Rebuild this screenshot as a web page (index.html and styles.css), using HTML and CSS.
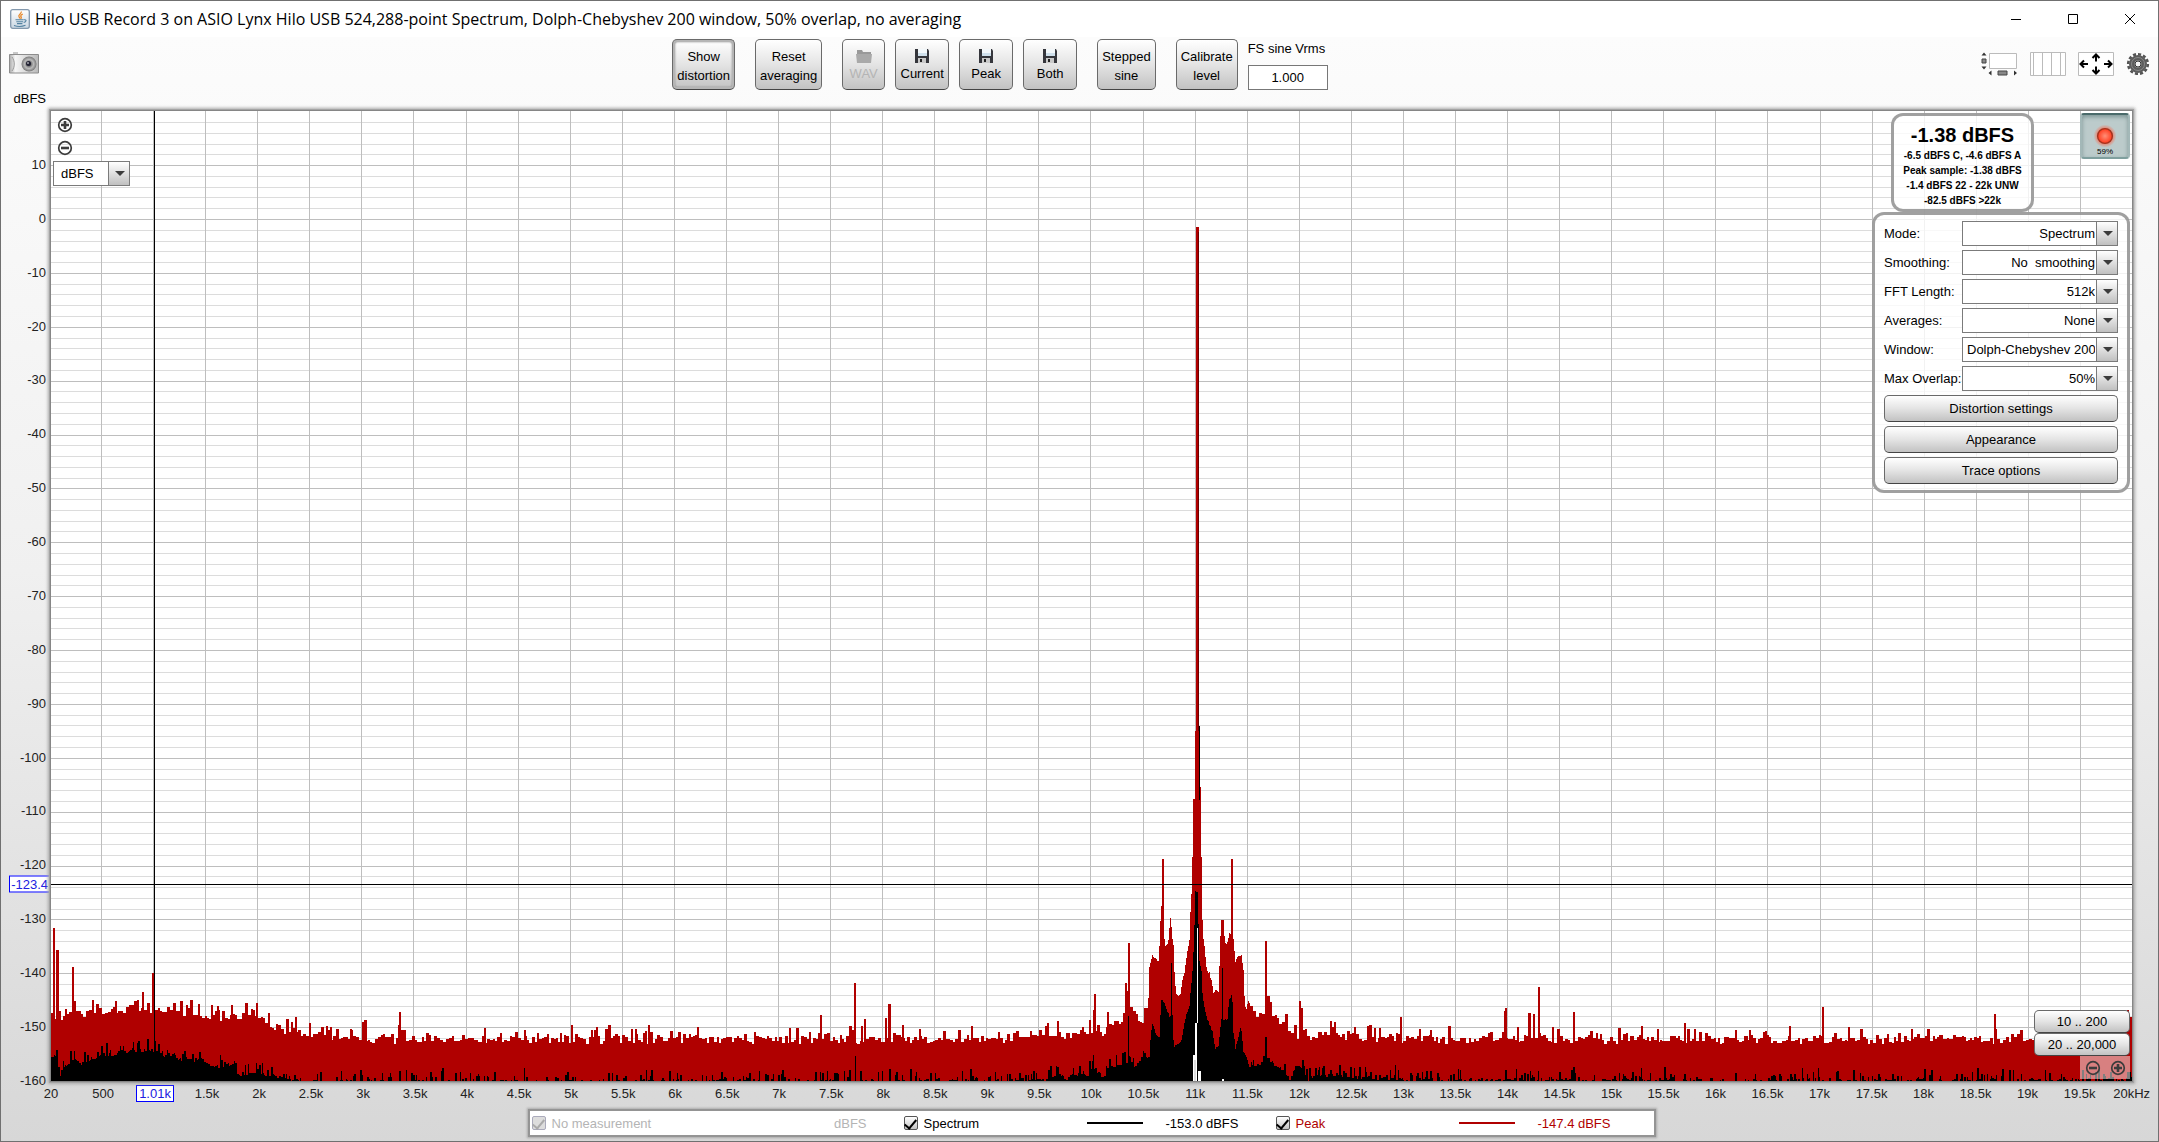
FILE: index.html
```html
<!DOCTYPE html>
<html lang="en">
<head>
<meta charset="utf-8">
<title>Hilo USB Record 3 on ASIO Lynx Hilo USB</title>
<link rel="stylesheet" href="styles.css">
</head>
<body>
<svg class="defs" width="0" height="0" aria-hidden="true">
  <symbol id="floppy" viewBox="0 0 16 16">
    <path d="M1 1h13l1 2v12H1z" fill="#35363c"/>
    <path d="M4 1h9v7H4z" fill="#cfe0ec"/>
    <path d="M4 1h9v4H4z" fill="#f3f8fb"/>
    <path d="M4 10h8v5H4z" fill="#c9c9c9"/>
    <path d="M6 11h2v3H6z" fill="#222"/>
  </symbol>
  <symbol id="plus" viewBox="0 0 16 16">
    <circle cx="8" cy="8" r="6.3" fill="none" stroke="#3c3c3c" stroke-width="1.7"/>
    <path d="M8 4v8M4 8h8" stroke="#3c3c3c" stroke-width="2.6"/>
  </symbol>
  <symbol id="minus" viewBox="0 0 16 16">
    <circle cx="8" cy="8" r="6.3" fill="none" stroke="#3c3c3c" stroke-width="1.7"/>
    <path d="M4 8h8" stroke="#3c3c3c" stroke-width="2.6"/>
  </symbol>
</svg>

<header class="titlebar">
  <svg class="java" width="20" height="20" viewBox="0 0 20 20" aria-hidden="true">
    <defs><linearGradient id="jg" x2="0" y2="1"><stop offset="0" stop-color="#fff"/><stop offset="1" stop-color="#c9d6e2"/></linearGradient></defs>
    <rect x=".7" y=".7" width="18.6" height="18.6" rx="2" fill="url(#jg)" stroke="#8398ad" stroke-width="1.3"/>
    <path d="M11 2.500c1.500 2-3.500 3-2 5.200.4.800 1 1.200.8 2M12.800 5c-2 1-2.600 2-1.600 3 .5.800 0 1.300-.5 1.700" fill="none" stroke="#e8892b" stroke-width="1.300"/>
    <path d="M5.500 10.800h8.200M6.300 12.800h6.800M7 14.600h5.400M4 16.500c3 1 8.500 1 11.500-.2M14 10.800c3-.6 2.500 2.200-.3 2.600" fill="none" stroke="#5382a1" stroke-width="1.100"/>
  </svg>
  <h1 class="title">Hilo USB Record 3 on ASIO Lynx Hilo USB 524,288-point Spectrum, Dolph-Chebyshev 200 window, 50% overlap, no averaging</h1>
  <div class="window-controls">
    <button type="button" aria-label="Minimize"><svg width="12" height="12"><path d="M1 6.500h10" stroke="#000"/></svg></button>
    <button type="button" aria-label="Maximize"><svg width="12" height="12"><path d="M1.500 1.500h9v9h-9z" fill="none" stroke="#000"/></svg></button>
    <button type="button" aria-label="Close"><svg width="12" height="12"><path d="M1 1l10 10M11 1L1 11" stroke="#000"/></svg></button>
  </div>
</header>

<div class="toolbar">
  <button type="button" class="icon-button" aria-label="Capture image">
    <svg width="30" height="22" viewBox="0 0 30 22">
      <defs>
        <linearGradient id="cam"><stop offset="0" stop-color="#aaa"/><stop offset=".2" stop-color="#f6f6f6"/><stop offset="1" stop-color="#b9b9b9"/></linearGradient>
        <radialGradient id="lens"><stop offset=".1" stop-color="#445"/><stop offset=".3" stop-color="#777"/><stop offset=".6" stop-color="#bbb"/><stop offset="1" stop-color="#777"/></radialGradient>
      </defs>
      <path d="M4 0h5v3H4z" fill="#c8c8c8"/>
      <path d="M.5 2.500h29v18.500H.5z" fill="url(#cam)" stroke="#8c8c8c"/>
      <path d="M3 5c3 4 3 10 0 14" fill="none" stroke="#999"/>
      <circle cx="20" cy="12" r="7.500" fill="url(#lens)"/>
      <circle cx="19.500" cy="11.500" r="2.500" fill="#223"/>
      <circle cx="19" cy="11" r=".8" fill="#fff"/>
    </svg>
  </button>

  <div class="actions">
    <button type="button" class="btn tall pressed">Show<br>distortion</button>
    <button type="button" class="btn tall">Reset<br>averaging</button>
    <div class="save-group">
      <button type="button" class="btn tall wav" disabled>
        <svg width="18" height="16" viewBox="0 0 18 16"><path d="M2 2h5l1 2h8v10H2z" fill="#999"/><path d="M1 6h16l-1 9H2z" fill="#a9a9a9"/></svg>WAV</button>
      <button type="button" class="btn tall save"><svg width="16" height="16"><use href="#floppy"/></svg>Current</button>
      <button type="button" class="btn tall save"><svg width="16" height="16"><use href="#floppy"/></svg>Peak</button>
      <button type="button" class="btn tall save"><svg width="16" height="16"><use href="#floppy"/></svg>Both</button>
    </div>
    <button type="button" class="btn tall">Stepped<br>sine</button>
    <div class="calibrate">
      <button type="button" class="btn tall">Calibrate<br>level</button>
      <div class="vrms">
        <label for="vrms">FS sine Vrms</label>
        <input id="vrms" type="text" value="1.000">
      </div>
    </div>
  </div>

  <div class="view-tools">
    <button type="button" class="icon-button" aria-label="Scrollbars">
      <svg width="37" height="24" viewBox="0 0 37 24">
        <path d="M8.500 1.500h27v15h-27z" fill="#fff" stroke="#bbb"/>
        <path d="M.5 3.500L3 .5l2.500 3zM.5 14.500h5L3 17.500zM10.500 18.500v5L7.500 21zM33 18.500v5l3-2.500z" fill="#333"/>
        <path d="M1 7h4v4H1zM17 19h9v4h-9z" fill="#888" stroke="#444"/>
      </svg>
    </button>
    <button type="button" class="icon-button" aria-label="Frequency axis">
      <svg width="36" height="24" viewBox="0 0 36 24"><path d="M.5.5h35v23H.5zM3.500 1v22M12.500 1v22M21.500 1v22M30.500 1v22" fill="#fff" stroke="#bbb"/></svg>
    </button>
    <button type="button" class="icon-button" aria-label="Graph limits">
      <svg width="36" height="24" viewBox="0 0 36 24">
        <path d="M.5.5h35v23H.5z" fill="#fff" stroke="#bbb"/>
        <path d="M10 12H3M6 8.500L2.500 12 6 15.500M26 12h7M30 8.500l3.500 3.500-3.500 3.500M18 9.500v-7M14.500 6L18 2.500 21.500 6M18 14.500v7M14.500 18l3.500 3.500 3.500-3.500" fill="none" stroke="#000" stroke-width="2"/>
      </svg>
    </button>
    <button type="button" class="icon-button" aria-label="Settings">
      <svg width="24" height="24" viewBox="0 0 24 24">
        <circle cx="12" cy="12" r="9.800" fill="none" stroke="#555" stroke-width="2.600" stroke-dasharray="3.100 2"/>
        <circle cx="12" cy="12" r="6.200" fill="#eee" stroke="#5c5c5c" stroke-width="5.600"/>
        <circle cx="12" cy="12" r="6.500" fill="none" stroke="#8a8a8a" stroke-width="1"/>
        <circle cx="12" cy="12" r="3" fill="#f4f4f4" stroke="#333"/>
      </svg>
    </button>
  </div>
</div>

<main class="chart">
  <div class="unit">dBFS</div>
  <div class="y-axis">
    <span></span><span>10</span><span>0</span><span>-10</span><span>-20</span><span>-30</span><span>-40</span><span>-50</span><span>-60</span><span>-70</span><span>-80</span><span>-90</span><span>-100</span><span>-110</span><span>-120</span><span>-130</span><span>-140</span><span>-150</span><span>-160</span>
    <output class="cursor-level">-123.4</output>
  </div>

  <div class="plot">
    <svg id="graph" class="graph" viewBox="51 111 2081 970" preserveAspectRatio="none" role="img" aria-label="Spectrum and peak traces"></svg>

    <div class="top-left">
      <button type="button" class="zoom" aria-label="Zoom in vertically"><svg width="16" height="16"><use href="#plus"/></svg></button>
      <button type="button" class="zoom" aria-label="Zoom out vertically"><svg width="16" height="16"><use href="#minus"/></svg></button>
      <span class="select unit-select"><select aria-label="Level unit"><option>dBFS</option></select></span>
    </div>

    <div class="top-right">
      <div class="status">
        <section class="level">
          <strong>-1.38 dBFS</strong>
          <span>-6.5 dBFS C, -4.6 dBFS A</span>
          <span>Peak sample: -1.38 dBFS</span>
          <span>-1.4 dBFS 22 - 22k UNW</span>
          <span>-82.5 dBFS &gt;22k</span>
        </section>
        <button type="button" class="record" aria-label="Record">
          <svg width="24" height="24" viewBox="0 0 24 24">
            <defs>
              <radialGradient id="glow"><stop offset=".6" stop-color="#ff5a3c" stop-opacity=".7"/><stop offset="1" stop-color="#ff5a3c" stop-opacity="0"/></radialGradient>
              <radialGradient id="led"><stop offset="0" stop-color="#ff8f78"/><stop offset="1" stop-color="#ff3a1c"/></radialGradient>
            </defs>
            <circle cx="12" cy="12" r="11.500" fill="url(#glow)"/>
            <circle cx="12" cy="12" r="7.400" fill="url(#led)" stroke="#a3331f" stroke-width="1.400"/>
          </svg>
          <span>59%</span>
        </button>
      </div>
      <form class="panel">
        <label for="mode">Mode:</label><span class="select"><select id="mode"><option>Spectrum</option></select></span>
        <label for="smoothing">Smoothing:</label><span class="select"><select id="smoothing"><option>No&nbsp; smoothing</option></select></span>
        <label for="fft">FFT Length:</label><span class="select"><select id="fft"><option>512k</option></select></span>
        <label for="averages">Averages:</label><span class="select"><select id="averages"><option>None</option></select></span>
        <label for="window">Window:</label><span class="select"><select id="window"><option>Dolph-Chebyshev 200</option></select></span>
        <label for="overlap">Max Overlap:</label><span class="select"><select id="overlap"><option>50%</option></select></span>
        <button type="button" class="btn">Distortion settings</button>
        <button type="button" class="btn">Appearance</button>
        <button type="button" class="btn">Trace options</button>
      </form>
    </div>

    <div class="bottom-right">
      <button type="button" class="btn">10 .. 200</button>
      <button type="button" class="btn">20 .. 20,000</button>
      <div class="zoom-pair">
        <button type="button" class="zoom" aria-label="Zoom out horizontally"><svg width="16" height="16"><use href="#minus"/></svg></button>
        <button type="button" class="zoom" aria-label="Zoom in horizontally"><svg width="16" height="16"><use href="#plus"/></svg></button>
      </div>
    </div>
  </div>

  <div class="x-axis">
    <span>20</span><span>500</span><span><output class="cursor-freq">1.01k</output></span><span>1.5k</span><span>2k</span><span>2.5k</span><span>3k</span><span>3.5k</span><span>4k</span><span>4.5k</span><span>5k</span><span>5.5k</span><span>6k</span><span>6.5k</span><span>7k</span><span>7.5k</span><span>8k</span><span>8.5k</span><span>9k</span><span>9.5k</span><span>10k</span><span>10.5k</span><span>11k</span><span>11.5k</span><span>12k</span><span>12.5k</span><span>13k</span><span>13.5k</span><span>14k</span><span>14.5k</span><span>15k</span><span>15.5k</span><span>16k</span><span>16.5k</span><span>17k</span><span>17.5k</span><span>18k</span><span>18.5k</span><span>19k</span><span>19.5k</span><span>20kHz</span>
  </div>

  <div class="legend">
    <div class="trace off"><input type="checkbox" id="t1" checked disabled><label for="t1">No measurement</label><span class="value">dBFS</span></div>
    <div class="trace"><input type="checkbox" id="t2" checked><label for="t2">Spectrum</label><i class="line"></i><span class="value">-153.0 dBFS</span></div>
    <div class="trace peak"><input type="checkbox" id="t3" checked><label for="t3">Peak</label><i class="line"></i><span class="value">-147.4 dBFS</span></div>
  </div>
</main>
<script src="graph.js"></script>
</body>
</html>
```
FILE: styles.css
```css
* { box-sizing: border-box; }

body {
  margin: 0;
  height: 100vh;
  display: flex;
  flex-direction: column;
  border: 1px solid #707070;
  background: linear-gradient(#fcfcfc 36px, #f0f0f0 50%, #d7d7d7);
  color: #000;
  font: 13px/15px "Liberation Sans", Arial, sans-serif;
  overflow: hidden;
}

button, input, select { font: inherit; color: inherit; margin: 0; }
button { padding: 0; border: 0; background: none; }
svg { display: block; }
.defs { position: absolute; }

.titlebar {
  display: flex;
  align-items: center;
  height: 36px;
  flex: none;
  padding-left: 9px;
  gap: 5px;
  background: #fff;
}
.title {
  flex: 1;
  margin: 0;
  font: 400 16px/24px "Open Sans", "Segoe UI", sans-serif;
  white-space: nowrap;
}
.window-controls { display: flex; height: 100%; }
.window-controls button { width: 57px; display: grid; place-items: center; }

.toolbar {
  display: flex;
  justify-content: space-between;
  align-items: flex-start;
  flex: none;
  padding: 2px 8px 0;
}
.icon-button { margin-top: 13px; }
.actions { display: flex; gap: 20px; }
.save-group, .calibrate { display: flex; gap: 10px; }
.view-tools { display: flex; gap: 12px; margin-left: 20px; }

.btn {
  border: 1px solid #6a6a6a;
  border-bottom-color: #444;
  border-radius: 5px;
  background: linear-gradient(#fff, #e4e4e4 50%, #c2c2c2);
}
.tall {
  height: 51px;
  padding: 2px 4px 0;
  line-height: 19px;
  text-align: center;
}
.tall svg { margin: 0 auto; }
.tall:disabled { color: #b4b4b4; }
.save { width: 54px; }
.wav { width: 43px; }
.pressed { box-shadow: inset 0 0 0 2px #b5b5b5, inset 0 0 2px 2px #888; }
.vrms { display: flex; flex-direction: column; justify-content: space-between; }
.vrms label { padding-top: 2px; }
.vrms input {
  width: 80px;
  height: 25px;
  border: 1px solid #777;
  background: #fff;
  text-align: center;
}

.chart {
  flex: 1;
  min-height: 0;
  display: grid;
  grid-template-columns: 50px 1fr;
  grid-template-rows: 21px 1fr auto auto;
  padding: 0 26px 4px 0;
}
.unit { padding: 1px 5px 0 0; text-align: right; }
.y-axis {
  grid-row: 2;
  grid-column: 1;
  position: relative;
  display: flex;
  flex-direction: column;
  justify-content: space-between;
  padding-right: 5px;
  text-align: right;
}
.y-axis span { height: 0; line-height: 0; color: #222; }
.cursor-level, .cursor-freq {
  border: 1px solid #00f;
  background: #fff;
  color: #2020e0;
}
.cursor-level {
  position: absolute;
  right: 0;
  top: 79.7%;
  padding: 0 2px 0 1px;
  transform: translateY(-50%);
}
.plot {
  grid-row: 2;
  grid-column: 2;
  position: relative;
  background: #fff;
  box-shadow: 0 0 0 1px #868686, 0 0 0 2px #a4a4a4, 0 0 3px 3px #a8a8a8;
}
.graph { position: absolute; inset: 0; width: 100%; height: 100%; shape-rendering: crispEdges; }
.minor { stroke: #dcdcdc; }
.major { stroke: #bebebe; }
.cursor { stroke: #000; }
.trace-peak { fill: #b00000; }
.trace-spectrum { fill: #000; }
.trace-edge { fill: #6b0000; }
.gap { fill: #fff; }

.x-axis {
  grid-row: 3;
  grid-column: 2;
  display: flex;
  justify-content: space-between;
  padding-top: 4px;
  height: 28px;
}
.x-axis > span {
  width: 0;
  height: 17px;
  display: flex;
  justify-content: center;
  align-items: center;
  color: #222;
  white-space: nowrap;
}
.cursor-freq { padding: 0 2px; }

.legend {
  grid-row: 4;
  grid-column: 2;
  justify-self: center;
  width: 1128px;
  max-width: 100%;
  height: 28px;
  display: grid;
  grid-template-columns: repeat(3, 372px);
  align-items: center;
  padding-left: 2px;
  border: 2px solid #949494;
  background: #fff;
  box-shadow: 0 0 2px 1px #aaa;
}
.trace {
  display: grid;
  grid-template-columns: 14px 157px 56px 90px;
  column-gap: 6px;
  align-items: center;
}
.trace .value { grid-column: 4; text-align: right; }
.trace input {
  appearance: none;
  width: 14px;
  height: 14px;
  border: 1px solid #555;
  border-radius: 2px;
  background: linear-gradient(#fff, #c4c4c4);
  display: grid;
  place-items: center;
}
.trace input::before {
  content: "";
  width: 5px;
  height: 10px;
  margin-bottom: 3px;
  border: solid #000;
  border-width: 0 2px 2px 0;
  transform: rotate(40deg);
}
.off { color: #b4b4b4; }
.off input { border-color: #aab; background: #ddd; }
.off input::before { border-color: #aaa; }
.line { grid-column: 3; height: 2px; background: currentColor; }
.peak { color: #b00000; }

.select { position: relative; display: block; height: 25px; }
.select select {
  appearance: none;
  width: 100%;
  height: 25px;
  padding: 0 22px 0 4px;
  border: 1px solid #7b7b7b;
  border-radius: 0;
  background: #fff;
  text-align-last: right;
}
.select::before {
  content: "";
  position: absolute;
  inset: 0 0 0 auto;
  width: 20px;
  border: 1px solid #7b7b7b;
  background: linear-gradient(#fff, #c0c0c0);
  pointer-events: none;
}
.select::after {
  content: "";
  position: absolute;
  right: 5px;
  top: 10px;
  border: solid transparent;
  border-width: 5px 5px 0;
  border-top-color: #3c3c3c;
  pointer-events: none;
}

.top-left { position: absolute; left: 2px; top: 2px; }
.zoom { display: grid; place-items: center; width: 24px; height: 23px; }
.unit-select { width: 77px; margin-top: 2px; }
.unit-select select { padding: 0 0 0 7px; text-align-last: left; }

.top-right {
  position: absolute;
  top: 2px;
  right: 2px;
  width: 258px;
}
.status { display: flex; justify-content: flex-end; align-items: flex-start; gap: 46px; }
.level, .panel {
  border: 3px solid rgba(128, 128, 128, .75);
  border-radius: 12px;
  background: rgba(255, 255, 255, .8);
}
.level {
  width: 143px;
  height: 99px;
  padding-top: 6px;
  display: flex;
  flex-direction: column;
  align-items: center;
  font-weight: 700;
  font-size: 10px;
  white-space: nowrap;
}
.level strong { font-size: 20px; line-height: 26px; }
.record {
  width: 50px;
  height: 46px;
  display: flex;
  flex-direction: column;
  align-items: center;
  justify-content: flex-end;
  border: 2px solid #55807f;
  border-color: #4a6a6a #a3b8b8 #7f9f9e;
  border-radius: 4px;
  background: #bccbcb;
  box-shadow: inset 0 2px 4px #7c9494;
  font-size: 8px;
  line-height: 8px;
  padding-bottom: 1px;
}
.panel {
  display: grid;
  grid-template-columns: 78px 156px;
  gap: 4px 0;
  align-items: center;
  padding: 6px 9px;
}
.panel label { white-space: nowrap; }
.panel .btn { grid-column: 1 / -1; height: 27px; }

.bottom-right {
  position: absolute;
  right: 2px;
  bottom: 2px;
  width: 96px;
  display: flex;
  flex-direction: column;
}
.bottom-right .btn { height: 23px; }
.zoom-pair {
  align-self: flex-end;
  display: flex;
  width: 50px;
  background: rgba(255, 255, 255, .5);
}
.zoom-pair .zoom { width: 25px; }
```
FILE: graph.js
```js
const NS = "http://www.w3.org/2000/svg";
const graph = document.getElementById("graph");
const LEFT = 51, RIGHT = 2132, TOP = 111, BOTTOM = 1081;

const freqX = hz => LEFT + (hz - 20) * (RIGHT - LEFT) / 19980;
const levelY = db => 219 - db * 5.3875;

function path(d, cls, stroked) {
  const p = document.createElementNS(NS, "path");
  p.setAttribute("d", d);
  p.setAttribute("class", cls);
  if (stroked) p.setAttribute("fill", "none");
  graph.appendChild(p);
}

// Repeatable noise source, so the trace is stable between reloads
let seed = 20417;
function rand() {
  seed = (seed * 1103515245 + 12345) % 2147483648;
  return seed / 2147483648;
}

function interpolate(points, x) {
  for (let i = 1; i < points.length; i++) {
    if (x <= points[i][0]) {
      const [x0, y0] = points[i - 1], [x1, y1] = points[i];
      return y0 + (y1 - y0) * (x - x0) / (x1 - x0 || 1);
    }
  }
  return points[points.length - 1][1];
}

// Lobes around the 11 kHz carrier, in thirds of a unit from (1050, 820)
const lobes = list => list.map(([x, y]) => [1050 + x / 3, 820 + y / 3]);

const peakFloor = [
  [51, 1022], [80, 1018], [110, 1014], [130, 1012], [150, 1014], [190, 1017], [210, 1023],
  [255, 1021], [275, 1033], [310, 1039], [340, 1043], [400, 1044], [1020, 1044], [1050, 1040],
  ...lobes([[40, 660], [100, 650], [125, 640], [155, 655], [190, 620], [222, 610], [226, 530],
    [232, 500], [240, 570], [250, 590], [265, 605], [280, 612], [286, 560], [296, 570], [300, 445],
    [308, 410], [320, 420], [328, 430], [332, 330], [335, 260], [341, 260], [343, 345], [348, 380],
    [355, 372], [359, 355], [361, 298], [365, 300], [367, 350], [372, 380], [376, 480], [380, 525],
    [392, 532], [398, 490], [405, 460], [412, 410], [420, 365], [423, 280], [426, 225], [428, 115],
    [456, 115], [458, 280], [462, 360], [468, 410], [473, 460], [480, 462], [487, 490], [492, 520],
    [500, 514], [508, 520], [512, 365], [516, 305], [522, 305], [526, 365], [532, 380], [540, 345],
    [551, 350], [558, 430], [565, 408], [576, 412], [582, 455], [586, 560], [590, 575], [596, 542],
    [602, 555], [605, 590], [620, 602], [630, 580], [643, 595], [645, 540], [654, 545], [660, 580],
    [668, 612], [710, 622], [720, 660], [750, 655], [780, 662], [830, 650], [857, 640], [870, 662]]),
  [1360, 1043], [1400, 1044], [2120, 1044], [2132, 1040]
];

const spectrumFloor = [
  [51, 1062], [57, 1057], [60, 1078], [65, 1069], [75, 1062], [82, 1067], [95, 1060], [130, 1053],
  [150, 1052], [175, 1061], [200, 1062], [215, 1070], [230, 1067], [240, 1076], [260, 1075],
  [285, 1081], [310, 1084], [1000, 1084], [1040, 1082],
  ...lobes([[0, 782], [25, 765], [50, 784], [75, 770], [115, 775], [128, 745], [140, 765], [160, 778],
    [180, 750], [225, 740], [240, 715], [250, 735], [260, 748], [282, 708], [300, 718], [304, 640],
    [310, 612], [318, 642], [330, 655], [335, 542], [345, 552], [360, 592], [369, 590], [373, 682],
    [395, 667], [410, 590], [420, 560], [424, 510], [430, 450], [434, 350], [438, 215], [446, 220],
    [448, 410], [456, 460], [460, 540], [470, 590], [490, 640], [497, 687], [508, 677], [515, 600],
    [535, 602], [538, 546], [548, 522], [552, 640], [558, 687], [575, 622], [582, 700], [590, 712],
    [600, 742], [645, 745], [655, 722], [680, 748], [700, 755], [720, 780], [740, 745], [765, 748],
    [770, 785], [820, 770], [900, 778], [1020, 782]]),
  [1440, 1083], [2132, 1083]
];

// [x, top, width]
const peakSpikes = [
  [53, 928, 2], [56, 950, 3], [72, 967, 2], [74, 1001, 2], [142, 992, 2], [152, 973, 2],
  [115, 1001, 2], [173, 1003, 3], [217, 1006, 2], [231, 1005, 2], [245, 1006, 2], [251, 1009, 2],
  [256, 1003, 2], [268, 1013, 2], [291, 1022, 2], [295, 1017, 2], [330, 1027, 2], [350, 1029, 2],
  [362, 1022, 2], [364, 1020, 3], [399, 1012, 2], [484, 1028, 2], [524, 1030, 2], [571, 1025, 2],
  [594, 1030, 2], [635, 1029, 2], [648, 1025, 2], [789, 1028, 2], [820, 1015, 2], [854, 983, 2],
  [861, 1026, 2], [864, 1019, 2], [885, 1018, 2], [888, 1004, 3], [902, 1025, 2], [919, 1029, 2],
  [1082, 1027, 2], [1093, 1010, 1], [1094, 994, 2], [1107, 1012, 2], [1128, 943, 2], [1162, 859, 2],
  [1231, 859, 2], [1265, 941, 2], [1299, 1001, 2], [1301, 1008, 2], [1334, 1022, 2], [1379, 1028, 2],
  [1400, 1017, 2], [1430, 1030, 2], [1504, 1011, 2], [1505, 1008, 2], [1517, 1027, 2],
  [1528, 1013, 3], [1533, 1014, 2], [1538, 987, 2], [1552, 1027, 2], [1573, 1012, 2],
  [1618, 1029, 2], [1641, 1026, 2], [1657, 1029, 2], [1684, 1023, 2], [1749, 1030, 2],
  [1789, 1026, 2], [1822, 1007, 2], [1848, 1027, 2], [1911, 1029, 2], [1994, 1014, 2],
  [2127, 1010, 2], [2130, 1017, 2],
  [1192, 857, 10], [1193, 799, 8], [1195, 731, 5], [1200, 787, 1], [1196, 227, 3]
];

const spectrumSpikes = [
  [820, 1072, 1], [855, 1056, 1], [1093, 1055, 1], [1128, 1016, 1], [1171, 963, 1],
  [1222, 968, 1], [1265, 1037, 2], [1299, 1067, 2], [1538, 1071, 1], [1573, 1067, 2]
];

const spikes = list => list.map(([x, y, w]) => `M${x} ${BOTTOM}V${y}h${w}V${BOTTOM}z`).join("");

function noiseTrace(floor, small, large, wide) {
  let d = `M${LEFT} ${BOTTOM}`;
  let x = LEFT;
  while (x < RIGHT) {
    const nearCarrier = x > 1145 && x < 1250;
    const step = nearCarrier ? 1 : rand() < 0.5 ? wide : wide - 1;
    let y = interpolate(floor, x + 1);
    y -= nearCarrier ? rand() * 2 : rand() * small + Math.pow(rand(), 5) * large;
    d += `V${Math.min(BOTTOM, Math.round(y))}H${Math.min(RIGHT, x + step)}`;
    x += step;
  }
  return d + `V${BOTTOM}z`;
}

let minor = "", major = "";
for (let db = -158; db < 20; db += 2) {
  const line = `M${LEFT} ${Math.round(levelY(db)) + 0.5}H${RIGHT}`;
  if (db % 10) minor += line; else major += line;
}
for (let hz = 500; hz < 20000; hz += 500) {
  major += `M${Math.round(freqX(hz)) + 0.5} ${TOP}V${BOTTOM}`;
}
path(minor, "minor", true);
path(major, "major", true);

path(noiseTrace(peakFloor, 8, 13, 3), "trace-peak");
path(spikes(peakSpikes), "trace-peak");
path("M1198 232h1V731h-1z", "trace-edge");
path("M1199 726h1V800h-1z", "trace-spectrum");
path(noiseTrace(spectrumFloor, 4, 13, 2), "trace-spectrum");
path(spikes(spectrumSpikes), "trace-spectrum");
path("M1197 928h1V1023h-1zM1195 1023h2V1081h-4V1055h2zM1198 1071h3v10h-3zM1222 1079h2v2h-2z", "gap");
path("M1194 1060h1v21h-1z", "minor");

path(`M${LEFT} 884.5H${RIGHT}M154.500 ${TOP}V${BOTTOM}`, "cursor", true);
```
